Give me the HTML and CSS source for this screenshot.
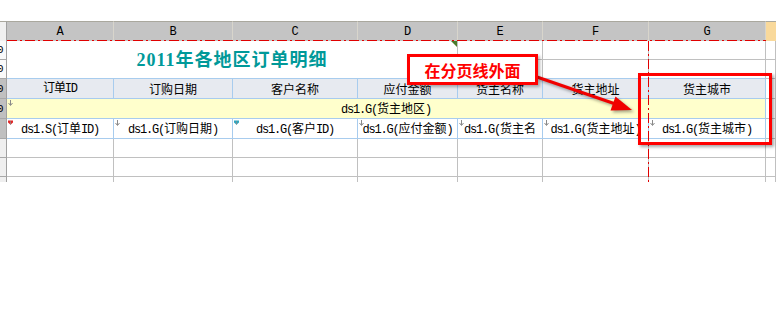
FILE: index.html
```html
<!doctype html>
<html lang="zh-CN">
	<head>
		<meta charset="UTF-8" />
		<title>2011年各地区订单明细</title>
		<link rel="stylesheet" href="styles.css">
	</head>
	<body>
		<div class="page">
			<div class="sheet">
				<!-- column headings -->
				<div class="corner"></div>
				<div class="colhead">A</div>
				<div class="colhead">B</div>
				<div class="colhead">C</div>
				<div class="colhead">D</div>
				<div class="colhead">E</div>
				<div class="colhead">F</div>
				<div class="colhead">G</div>
				<div class="colhead sel"></div>

				<!-- row 1 -->
				<div class="rh top"><span>0</span></div>
				<div class="cell title">2011年各地区订单明细<i class="flag"></i></div>
				<div class="cell"></div>
				<div class="cell"></div>
				<div class="cell"></div>
				<div class="cell"></div>

				<!-- row 2 -->
				<div class="rh top"><span>0</span></div>
				<div class="cell blue-bottom"></div>
				<div class="cell blue-bottom"></div>
				<div class="cell blue-bottom"></div>
				<div class="cell"></div>

				<!-- row 3: column titles -->
				<div class="rh sel"><span>0</span></div>
				<div class="cell hd"><span class="m">订单ID</span></div>
				<div class="cell hd">订购日期</div>
				<div class="cell hd">客户名称</div>
				<div class="cell hd">应付金额</div>
				<div class="cell hd">货主名称</div>
				<div class="cell hd">货主地址</div>
				<div class="cell hd">货主城市</div>
				<div class="cell"></div>

				<!-- row 4: group -->
				<div class="rh sel"><span>0</span></div>
				<div class="cell group">
					<svg class="mark" viewBox="0 0 5 6"><path d="M2.5 0v5M0.5 3l2 2.5 2-2.5" stroke="#8a8a8a" fill="none"/></svg>
					<p class="txt"><span class="m">ds1.G(</span>货主地区<span class="m">)</span></p>
				</div>
				<div class="cell"></div>

				<!-- row 5: fields -->
				<div class="rh sel"></div>
				<div class="cell field">
					<svg class="mark" viewBox="0 0 6 6"><path d="M0 0h6v2.5l-3 2.5-3-2.5z" fill="#e02828"/><path d="M3 1v4" stroke="#8a8a8a"/></svg>
					<p class="txt"><span class="m">ds1.S(</span>订单<span class="m">ID)</span></p>
				</div>
				<div class="cell field">
					<svg class="mark" viewBox="0 0 5 6"><path d="M2.5 0v5M0.5 3l2 2.5 2-2.5" stroke="#8a8a8a" fill="none"/></svg>
					<p class="txt"><span class="m">ds1.G(</span>订购日期<span class="m">)</span></p>
				</div>
				<div class="cell field">
					<svg class="mark" viewBox="0 0 6 6"><path d="M0 0h6v2.5l-3 2.5-3-2.5z" fill="#2ea6bf"/><path d="M3 1v4" stroke="#8a8a8a"/></svg>
					<p class="txt"><span class="m">ds1.G(</span>客户<span class="m">ID)</span></p>
				</div>
				<div class="cell field">
					<svg class="mark" viewBox="0 0 5 6"><path d="M2.5 0v5M0.5 3l2 2.5 2-2.5" stroke="#8a8a8a" fill="none"/></svg>
					<p class="txt"><span class="m">ds1.G(</span>应付金额<span class="m">)</span></p>
				</div>
				<div class="cell field wrap">
					<svg class="mark" viewBox="0 0 5 6"><path d="M2.5 0v5M0.5 3l2 2.5 2-2.5" stroke="#8a8a8a" fill="none"/></svg>
					<p class="txt"><span class="m">ds1.G(</span>货主名称<span class="m">)</span></p>
				</div>
				<div class="cell field">
					<svg class="mark" viewBox="0 0 5 6"><path d="M2.5 0v5M0.5 3l2 2.5 2-2.5" stroke="#8a8a8a" fill="none"/></svg>
					<p class="txt"><span class="m">ds1.G(</span>货主地址<span class="m">)</span></p>
				</div>
				<div class="cell field">
					<svg class="mark" viewBox="0 0 5 6"><path d="M2.5 0v5M0.5 3l2 2.5 2-2.5" stroke="#8a8a8a" fill="none"/></svg>
					<p class="txt"><span class="m">ds1.G(</span>货主城市<span class="m">)</span></p>
				</div>
				<div class="cell"></div>

				<!-- row 6 -->
				<div class="rh"></div>
				<div class="cell"></div>
				<div class="cell"></div>
				<div class="cell"></div>
				<div class="cell"></div>
				<div class="cell"></div>
				<div class="cell"></div>
				<div class="cell"></div>
				<div class="cell"></div>

				<!-- row 7 -->
				<div class="rh"></div>
				<div class="cell"></div>
				<div class="cell"></div>
				<div class="cell"></div>
				<div class="cell"></div>
				<div class="cell"></div>
				<div class="cell"></div>
				<div class="cell"></div>
				<div class="cell"></div>

				<!-- row 8 (cut off) -->
				<div class="rh last"></div>
				<div class="cell last"></div>
				<div class="cell last"></div>
				<div class="cell last"></div>
				<div class="cell last"></div>
				<div class="cell last"></div>
				<div class="cell last"></div>
				<div class="cell last"></div>
				<div class="cell last"></div>
			</div>

			<!-- page break lines and arrow -->
			<svg class="overlay" width="776" height="324" viewBox="0 0 776 324">
				<g stroke="#e00000" stroke-width="1" stroke-dasharray="10 3 2 3" fill="none">
					<path d="M7 40.5H766"/>
					<path d="M648.5 41V182"/>
				</g>
				<g class="arrow">
					<path d="M537 77L614 103.5" stroke="#f00000" stroke-width="3"/>
					<path d="M632 110L610.5 110.5L615.5 96.5z" fill="#f00000"/>
				</g>
			</svg>
			<div class="callout">在分页线外面</div>
			<div class="highlight"></div>
		</div>
	</body>
</html>
```

FILE: styles.css
```css
body {
	margin: 0;
	overflow: hidden;
	background-color: #fff;
	font-family: "Noto Sans CJK SC", sans-serif;
}
.page {
	position: relative;
	width: 776px;
	height: 324px;
}
.sheet {
	display: grid;
	grid-template-columns: 7px 107px 119px 125px 100px 85px 106px 117px 10px;
	grid-template-rows: 20px 19px 19px 20px 20px 20px 19px 19px 5px;
	padding-top: 21px;
}
.corner,
.colhead {
	box-sizing: border-box;
	border-top: 1px solid #aaa89e;
	border-right: 1px solid #d8d5cc;
	background-color: #c4c4c4;
}
.corner {
	background-color: #f0f0f0;
	border-right-color: #a0a0a0;
}
.colhead {
	display: flex;
	align-items: center;
	justify-content: center;
	font: 12px "Liberation Mono", monospace;
	color: #000;
}
.colhead.sel {
	background-color: #f9d99b;
	border-right: none;
}
.rh {
	box-sizing: border-box;
	display: flex;
	align-items: center;
	overflow: hidden;
	background-color: #efefef;
	border-right: 1px solid #a0a0a0;
	border-bottom: 1px solid #a8a8a8;
	font: 11px "Liberation Mono", monospace;
	color: #000;
}
.rh span {
	margin-left: -3px;
}
.rh.top {
	background-color: #fafafa;
}
.rh.sel {
	background-color: #c0c0c0;
}
.rh.last,
.cell.last {
	border-bottom: none;
}
.cell {
	position: relative;
	box-sizing: border-box;
	display: flex;
	align-items: center;
	justify-content: center;
	overflow: hidden;
	white-space: nowrap;
	border-right: 1px solid #c0c0c0;
	border-bottom: 1px solid #c0c0c0;
	font-size: 12px;
	line-height: 14px;
	color: #000;
}
.txt {
	margin: 0;
}
.m {
	font-family: "Liberation Mono", monospace;
	letter-spacing: -1.2px;
}
.title {
	grid-column: span 4;
	grid-row: span 2;
	border-bottom-color: #a8ccee;
	color: #009999;
	font-family: "Liberation Serif", "Noto Sans CJK SC", serif;
	font-size: 18px;
	font-weight: bold;
	letter-spacing: 1px;
}
.flag {
	position: absolute;
	top: 0;
	right: 0;
	width: 0;
	height: 0;
	border-top: 6px solid #4b7b2b;
	border-left: 6px solid transparent;
}
.blue-bottom {
	border-bottom-color: #a8ccee;
}
.hd {
	background-color: #e7eaf0;
	border-color: #a8ccee;
}
.group {
	grid-column: span 7;
	background-color: #ffffcc;
	border-color: #a8ccee;
}
.field {
	border-color: #a8ccee;
}
.wrap {
	display: block;
	padding: 2px 4px 0;
	white-space: normal;
	text-align: center;
}
.mark {
	position: absolute;
	top: 1px;
	left: 1px;
	width: 5px;
	height: 6px;
}
.overlay {
	position: absolute;
	top: 0;
	left: 0;
	pointer-events: none;
}
.arrow {
	filter: drop-shadow(2px 2px 1.5px rgba(0, 0, 0, 0.35));
}
.callout {
	position: absolute;
	left: 407px;
	top: 54px;
	box-sizing: border-box;
	width: 131px;
	height: 31px;
	display: flex;
	align-items: center;
	justify-content: center;
	background-color: #fff;
	border: 3px solid #f00;
	box-shadow: 2px 2px 3px rgba(0, 0, 0, 0.3);
	color: #f00;
	font-size: 16px;
	font-weight: bold;
}
.highlight {
	position: absolute;
	left: 638px;
	top: 73px;
	box-sizing: border-box;
	width: 134px;
	height: 72px;
	border: 3px solid #f00;
	box-shadow: 2px 2px 3px rgba(0, 0, 0, 0.35);
}
```
